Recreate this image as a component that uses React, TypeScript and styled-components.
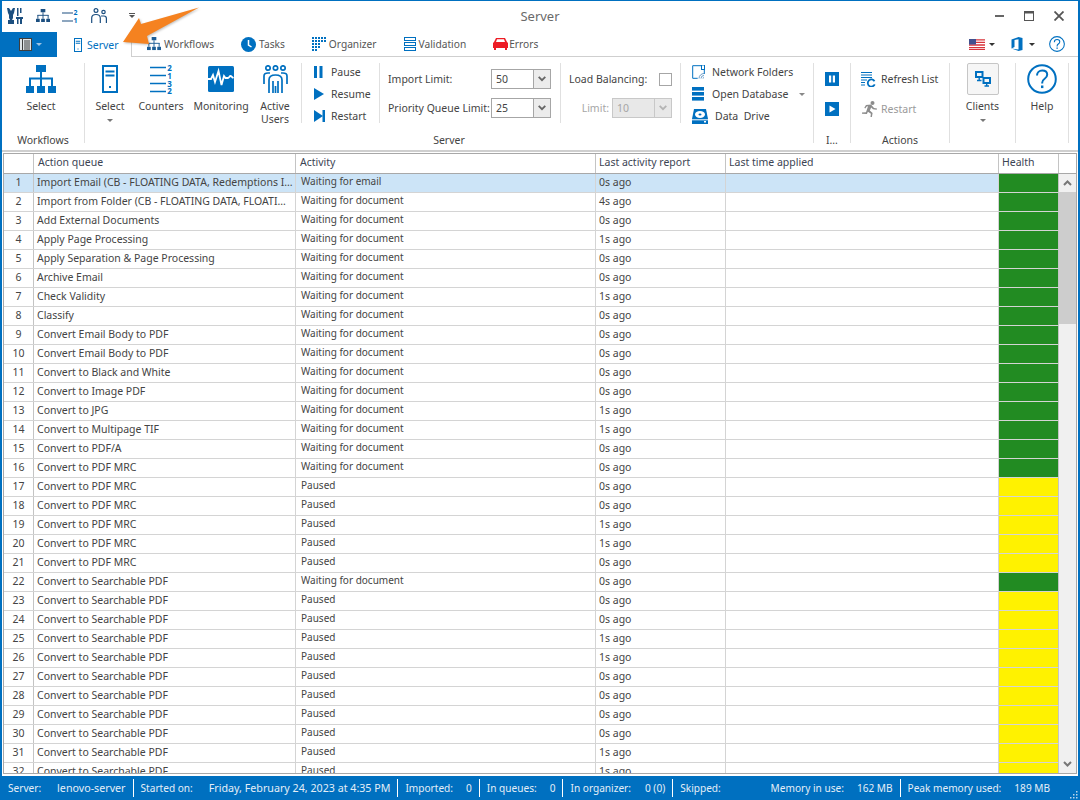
import React from 'react';
import styled, { createGlobalStyle } from 'styled-components';

const BLUE = '#0070c0';
const FONT = '"Noto Sans", "Liberation Sans", Arial, sans-serif';

const GlobalStyle = createGlobalStyle`
    html, body {
        margin: 0;
        padding: 0;
        background: #fff;
    }
    body {
        font-family: ${FONT};
        font-size: 10.5px;
        color: #444;
    }
`;

type Row = { name: string; activity: string; last: string; health: 'ok' | 'paused' };

const w = 'Waiting for document';
const p = 'Paused';
const rows: Row[] = [
    { name: 'Import Email (CB - FLOATING DATA, Redemptions I…', activity: 'Waiting for email', last: '0s ago', health: 'ok' },
    { name: 'Import from Folder (CB - FLOATING DATA, FLOATI…', activity: w, last: '4s ago', health: 'ok' },
    { name: 'Add External Documents', activity: w, last: '0s ago', health: 'ok' },
    { name: 'Apply Page Processing', activity: w, last: '1s ago', health: 'ok' },
    { name: 'Apply Separation & Page Processing', activity: w, last: '0s ago', health: 'ok' },
    { name: 'Archive Email', activity: w, last: '0s ago', health: 'ok' },
    { name: 'Check Validity', activity: w, last: '1s ago', health: 'ok' },
    { name: 'Classify', activity: w, last: '0s ago', health: 'ok' },
    { name: 'Convert Email Body to PDF', activity: w, last: '0s ago', health: 'ok' },
    { name: 'Convert Email Body to PDF', activity: w, last: '0s ago', health: 'ok' },
    { name: 'Convert to Black and White', activity: w, last: '0s ago', health: 'ok' },
    { name: 'Convert to Image PDF', activity: w, last: '0s ago', health: 'ok' },
    { name: 'Convert to JPG', activity: w, last: '1s ago', health: 'ok' },
    { name: 'Convert to Multipage TIF', activity: w, last: '1s ago', health: 'ok' },
    { name: 'Convert to PDF/A', activity: w, last: '0s ago', health: 'ok' },
    { name: 'Convert to PDF MRC', activity: w, last: '0s ago', health: 'ok' },
    { name: 'Convert to PDF MRC', activity: p, last: '0s ago', health: 'paused' },
    { name: 'Convert to PDF MRC', activity: p, last: '0s ago', health: 'paused' },
    { name: 'Convert to PDF MRC', activity: p, last: '1s ago', health: 'paused' },
    { name: 'Convert to PDF MRC', activity: p, last: '1s ago', health: 'paused' },
    { name: 'Convert to PDF MRC', activity: p, last: '0s ago', health: 'paused' },
    { name: 'Convert to Searchable PDF', activity: w, last: '0s ago', health: 'ok' },
    { name: 'Convert to Searchable PDF', activity: p, last: '0s ago', health: 'paused' },
    { name: 'Convert to Searchable PDF', activity: p, last: '0s ago', health: 'paused' },
    { name: 'Convert to Searchable PDF', activity: p, last: '1s ago', health: 'paused' },
    { name: 'Convert to Searchable PDF', activity: p, last: '1s ago', health: 'paused' },
    { name: 'Convert to Searchable PDF', activity: p, last: '0s ago', health: 'paused' },
    { name: 'Convert to Searchable PDF', activity: p, last: '0s ago', health: 'paused' },
    { name: 'Convert to Searchable PDF', activity: p, last: '0s ago', health: 'paused' },
    { name: 'Convert to Searchable PDF', activity: p, last: '0s ago', health: 'paused' },
    { name: 'Convert to Searchable PDF', activity: p, last: '1s ago', health: 'paused' },
    { name: 'Convert to Searchable PDF', activity: p, last: '1s ago', health: 'paused' },
];

/* icons */
const TreeIcon = ({ size = 30, color = BLUE }: { size?: number; color?: string }) => (
    <svg width={size} height={size * 28 / 30} viewBox="0 0 30 28" fill={color}>
        <rect x="10" y="0" width="10" height="7" />
        <rect x="14" y="7" width="2" height="6" />
        <rect x="3" y="12.5" width="24" height="2" />
        <rect x="3" y="13" width="2" height="8" />
        <rect x="14" y="13" width="2" height="8" />
        <rect x="25" y="13" width="2" height="8" />
        <rect x="0" y="21" width="8" height="7" />
        <rect x="11" y="21" width="8" height="7" />
        <rect x="22" y="21" width="8" height="7" />
    </svg>
);

const ServerIcon = ({ big }: { big?: boolean }) => (
    <svg width={big ? 16 : 8} height={big ? 28 : 14} viewBox="0 0 16 28" fill="none" stroke={BLUE} strokeWidth="2">
        <rect x="1" y="1" width="14" height="26" />
        <path d="M3.5 6.5h9M3.5 10.5h9" />
        <rect x="7" y="21" width="2" height="2" fill={BLUE} stroke="none" />
    </svg>
);

const CountersIcon = () => (
    <svg width="23" height="28" viewBox="0 0 23 28" overflow="visible">
        <path d="M0 2.500h16M0 10.500h16M0 18.500h16M0 26.500h16" stroke={BLUE} strokeWidth="1.6" />
        <g fill={BLUE} fontFamily={FONT} fontSize="8" fontWeight="700" textAnchor="middle">
            <text x="19.5" y="5.500">2</text>
            <text x="19.5" y="13.500">1</text>
            <text x="19.5" y="21.500">3</text>
            <text x="19.5" y="29">2</text>
        </g>
    </svg>
);

const MonitoringIcon = () => (
    <svg width="26" height="26" viewBox="0 0 26 26">
        <rect width="26" height="26" rx="1.5" fill={BLUE} />
        <path d="M0 13h3l2 -4 2 7 3.5 -11 3 14 2.5 -9 1.5 2h2.5c1 0 1.5 -2 2.5 -2s1 1 3 2" fill="none" stroke="#fff" strokeWidth="1.8" />
    </svg>
);

const ActiveUsersIcon = () => (
    <svg width="25" height="28" viewBox="0 0 25 28" fill="none" stroke={BLUE} strokeWidth="1.7">
        <circle cx="5" cy="3" r="2.2" />
        <circle cx="12.5" cy="3" r="2.2" />
        <circle cx="20" cy="3" r="2.2" />
        <path d="M1 19v-8c0-2 1.5-3 4-3h2" />
        <path d="M24 19v-8c0-2-1.5-3-4-3h-2" />
        <path d="M6 28v-13c0-3 2-5 6.5-5s6.5 2 6.5 5v13" />
        <path d="M10 28v-12M15 28v-12" />
        <path d="M12.5 21v7" />
    </svg>
);

const PauseIcon = () => (
    <svg width="9" height="12" viewBox="0 0 9 12" fill={BLUE}>
        <rect width="3" height="12" />
        <rect x="5.5" width="3" height="12" />
    </svg>
);

const PlayIcon = () => (
    <svg width="10" height="12" viewBox="0 0 10 12" fill={BLUE}>
        <path d="M0 0l10 6-10 6z" />
    </svg>
);

const RestartIcon = () => (
    <svg width="11" height="12" viewBox="0 0 11 12" fill={BLUE}>
        <path d="M0 0l9 6-9 6z" />
        <rect x="8.5" width="2.5" height="12" />
    </svg>
);

const NetworkIcon = () => (
    <svg width="13" height="14" viewBox="0 0 13 14" fill="none">
        <path d="M9 .7H.7v12.6h5M12.3 5v4" stroke={BLUE} />
        <rect x="9.5" y="0" width="3" height="4.5" fill="none" stroke={BLUE} />
        <path d="M7 13.5a5 5 0 0 1 5-5M9 13.5a3 3 0 0 1 3-3M11 13.5a1 1 0 0 1 1-1" stroke="#6a9cc8" />
    </svg>
);

const DatabaseIcon = () => (
    <svg width="12" height="14" viewBox="0 0 12 14" fill={BLUE}>
        <rect width="12" height="3.6" />
        <rect y="5" width="12" height="3.6" />
        <rect y="10" width="12" height="3.6" />
    </svg>
);

const DriveIcon = () => (
    <svg width="16" height="15" viewBox="0 0 16 15">
        <path d="M2 0h12l2 10v5H0v-5z" fill={BLUE} />
        <ellipse cx="8" cy="5.5" rx="5" ry="3.4" fill="#fff" />
        <ellipse cx="8" cy="5.5" rx="1.5" ry="1" fill={BLUE} />
        <path d="M0 10.8h16" stroke="#fff" />
        <rect x="12" y="12" width="2" height="1.5" fill="#fff" />
    </svg>
);

const SquareButtonIcon = ({ play }: { play?: boolean }) => (
    <svg width="14" height="14" viewBox="0 0 14 14">
        <rect width="14" height="14" fill={BLUE} />
        {play ? <path d="M4.5 3.5l6 3.5-6 3.5z" fill="#fff" /> : <path d="M4 3.5h2.2v7H4zM7.8 3.5H10v7H7.8z" fill="#fff" />}
    </svg>
);

const RefreshIcon = () => (
    <svg width="15" height="15" viewBox="0 0 15 15" fill="none" stroke={BLUE}>
        <path d="M0 .5h11M0 3h11M0 5.5h11M0 8h6M0 10.5h4M0 13h4" />
        <path d="M13.5 9.2a3.6 3.6 0 1 0 .2 3.2" strokeWidth="1.8" />
    </svg>
);

const RunnerIcon = () => (
    <svg width="17" height="16" viewBox="0 0 17 16" fill="#8c8c8c">
        <circle cx="11.5" cy="2" r="2" />
        <path d="M5 4l5-.5 3 3.5 3 .5-.3 1.3-3.7-.6-1.8-1.6-1.4 3 2.8 2.3-.7 4.1h-1.4l.4-3.3-3-2-1 2.3-4.9-.2v-1.4l4-.1 2-6-1.3.2-1.4 2-1-.7z" />
    </svg>
);

const ClientsIcon = () => (
    <svg width="16" height="16" viewBox="0 0 16 16" fill="none" stroke={BLUE} strokeWidth="2">
        <rect x="1" y="1" width="6.5" height="5" />
        <rect x="8.5" y="7" width="6.5" height="5" />
        <path d="M4.2 6v3.5M2 9.5h4.5M11.7 12v3M9.5 15h4.5" strokeWidth="1.4" />
    </svg>
);

const HelpCircle = ({ size }: { size: number }) => (
    <svg width={size} height={size} viewBox="0 0 30 30">
        <circle cx="15" cy="15" r="13.8" fill="none" stroke={BLUE} strokeWidth="2" />
        <path d="M10 11.5c0-3 2.2-5 5.2-5s5 1.8 5 4.3c0 2-1 3-2.8 4.2-1.5 1-2.2 1.8-2.2 3.7v.8" fill="none" stroke={BLUE} strokeWidth="2" />
        <rect x="14" y="21.5" width="2.4" height="2.6" fill={BLUE} />
    </svg>
);

const QuickToolsIcon = () => (
    <svg width="16" height="16" viewBox="0 0 16 16" fill="#1c4f80">
        <path d="M0 0l2 0 2 3 2-3 2 0-1 5-1 2v3l-1 2H3l-1-2V7L1 5z" />
        <path d="M10 0h1.5v8H10zM13 0h1.5v5H13z" />
        <path d="M9 9h7v2H9zM10 11h1.5v5H10zM13 11h2v5h-2zM1 12h6v4H1z" />
    </svg>
);

const QuickListIcon = () => (
    <svg width="16" height="14" viewBox="0 0 16 14" overflow="visible">
        <path d="M0 4h11M0 12h11" stroke="#1c4f80" strokeWidth="1.2" />
        <g fill={BLUE} fontFamily={FONT} fontSize="7" fontWeight="700" textAnchor="middle">
            <text x="13.5" y="6">2</text>
            <text x="13.5" y="14">1</text>
        </g>
    </svg>
);

const QuickUsersIcon = () => (
    <svg width="16" height="15" viewBox="0 0 16 15" fill="none" stroke="#1c4f80" strokeWidth="1.2">
        <circle cx="5" cy="2.5" r="1.9" />
        <circle cx="12.5" cy="4" r="1.7" />
        <path d="M.7 15V10c0-2.2 1.5-3.5 4.3-3.5S9.3 7.8 9.3 10v5" />
        <path d="M10 8h3c1.5 0 2.4.9 2.4 2.5V15" />
    </svg>
);

const FileIcon = () => (
    <svg width="13" height="13" viewBox="0 0 13 13">
        <rect x=".5" y=".5" width="12" height="12" fill="#dfe4e8" stroke="#3d3d3d" />
        <path d="M3.5 1v11" stroke="#3d3d3d" />
        <path d="M5 3h6M5 5h6M5 7h6M5 9h6M5 11h6" stroke="#3d3d3d" />
    </svg>
);

const ClockIcon = () => (
    <svg width="15" height="15" viewBox="0 0 15 15">
        <circle cx="7.5" cy="7.5" r="7.5" fill={BLUE} />
        <path d="M7.5 3v5l3 2" fill="none" stroke="#fff" strokeWidth="1.5" />
    </svg>
);

const OrganizerIcon = () => (
    <svg width="14" height="14" viewBox="0 0 14 14" fill={BLUE}>
        {[0, 1, 2, 3, 4].flatMap(r =>
            [0, 1, 2, 3, 4].filter(c => r === 0 || c < 2 || (r === 1 && c < 5) || (c < 3 && r < 4)).map(c => (
                <rect key={`${r}-${c}`} x={c * 3} y={r * 3} width="2" height="2" />
            ))
        )}
    </svg>
);

const ValidationIcon = () => (
    <svg width="12" height="14" viewBox="0 0 12 14" fill="none" stroke={BLUE}>
        <rect x=".5" y=".5" width="11" height="3" />
        <rect x=".5" y="5.5" width="11" height="3" />
        <rect x=".5" y="10.5" width="11" height="3" />
    </svg>
);

const CarIcon = () => (
    <svg width="15" height="12" viewBox="0 0 15 12" fill="#ed1c24">
        <path d="M3 0h9l2 4 1 1v5h-1v2h-2v-2H3v2H1v-2H0V5l1-1z" />
        <path d="M4 1.3h7l1 2.7H3z" fill="#fff" />
    </svg>
);

const FlagIcon = () => (
    <svg width="16" height="11" viewBox="0 0 16 11">
        <rect width="16" height="11" fill="#fff" />
        <path d="M0 .8h16M0 3.4h16M0 6h16M0 8.6h16" stroke="#d8343c" strokeWidth="1.3" />
        <rect y="10" width="16" height="1" fill="#d8343c" />
        <rect width="7" height="5.5" fill="#41508f" />
    </svg>
);

const OfficeIcon = () => (
    <svg width="12" height="14" viewBox="0 0 11 14" fill={BLUE}>
        <path d="M0 2.5L7 0l4 1v12l-4 1-7-2.5 7 1V2.2L3 3v7l-3 1.5z" />
    </svg>
);

const SelectChevron = ({ off }: { off?: boolean }) => (
    <svg width="8" height="6" viewBox="0 0 8 6" fill="none" stroke={off ? '#b4b4b4' : '#666'} strokeWidth="1.8">
        <path d="M.7 .8L4 4.2 7.3 .8" />
    </svg>
);

/* window chrome */
const Page = styled.div`
    position: relative;
    box-sizing: border-box;
    width: 1080px;
    height: 800px;
    overflow: hidden;
    display: flex;
    flex-direction: column;
    border: solid ${BLUE};
    border-width: 1px 2px 0;
    background: #fff;
`;

const TitleBar = styled.header`
    flex: none;
    height: 31px;
    box-sizing: border-box;
    padding-bottom: 2px;
    display: grid;
    grid-template-columns: 1fr auto 1fr;
    align-items: center;
`;

const QuickAccess = styled.div`
    display: flex;
    align-items: center;
    gap: 12.5px;
    padding-left: 5px;
`;

const QuickCaret = styled.span`
    margin-left: 10px;
    width: 6px;
    border-top: 1px solid #555;
    &::after {
        content: '';
        display: block;
        margin-top: 1px;
        border: 3px solid transparent;
        border-top: 3px solid #555;
        border-bottom: 0;
    }
`;

const Title = styled.div`
    font-size: 13px;
    color: #6a6a6a;
`;

const WindowControls = styled.div`
    display: flex;
    justify-content: flex-end;
    padding-right: 4px;
`;

const ControlButton = styled.div`
    width: 30px;
    height: 29px;
    display: flex;
    align-items: center;
    justify-content: center;
`;

const TabRow = styled.nav`
    flex: none;
    height: 24px;
    display: flex;
    align-items: stretch;
    border-bottom: 1px solid #cfcfcf;
`;

const FileButton = styled.div`
    width: 55px;
    margin-bottom: -1px;
    display: flex;
    align-items: center;
    padding-left: 17px;
    gap: 4px;
    box-sizing: border-box;
    background: ${BLUE};
`;

const SmallCaret = styled.span<{ $color?: string }>`
    width: 0;
    height: 0;
    border: 3px solid transparent;
    border-top: 3px solid ${p => p.$color || '#555'};
    border-bottom: 0;
`;

const ActiveTab = styled.div`
    width: 75px;
    box-sizing: border-box;
    margin-bottom: -1px;
    display: flex;
    align-items: center;
    gap: 5px;
    padding-left: 17px;
    background: #fff;
    border-right: 1px solid #cfcfcf;
    color: ${BLUE};
`;

const TabList = styled.div`
    display: flex;
    align-items: center;
    gap: 27px;
    padding-left: 15px;
`;

const Tab = styled.div<{ $gap?: number }>`
    display: flex;
    align-items: center;
    gap: ${p => p.$gap ?? 3}px;
    font-size: 10.2px;
    color: #555;
`;

const TabTools = styled.div`
    margin-left: auto;
    display: flex;
    align-items: center;
    padding-right: 13px;
`;

const TabTool = styled.div<{ $inner: number; $gap: number }>`
    display: flex;
    align-items: center;
    gap: ${p => p.$inner}px;
    margin-right: ${p => p.$gap}px;
`;

/* ribbon */
const Ribbon = styled.section`
    flex: none;
    box-sizing: border-box;
    height: 95px;
    display: flex;
    padding-top: 6px;
    border-bottom: 2px solid #cfcfcf;
`;

const Group = styled.div<{ $width: number }>`
    width: ${p => p.$width}px;
    flex: none;
    box-sizing: border-box;
    height: 80px;
    display: flex;
    flex-direction: column;
    border-right: 1px solid #e0e0e0;
`;

const GroupBody = styled.div`
    flex: 1;
    display: flex;
    min-height: 0;
`;

const GroupLabel = styled.div`
    text-align: center;
    line-height: 14px;
    margin-bottom: -4px;
    white-space: nowrap;
    color: #444;
`;

const Section = styled.div<{ $width: number; $pad?: number; $line?: boolean }>`
    width: ${p => p.$width}px;
    flex: none;
    box-sizing: border-box;
    height: 60px;
    padding-left: ${p => p.$pad || 0}px;
    border-right: ${p => (p.$line ? '1px solid #e0e0e0' : '0')};
`;

const BigRow = styled.div`
    display: flex;
`;

const BigButton = styled.div<{ $width: number }>`
    width: ${p => p.$width}px;
    flex: none;
    display: flex;
    flex-direction: column;
    align-items: center;
    text-align: center;
    line-height: 13px;
    color: #444;
`;

const BigIcon = styled.div`
    height: 32px;
    margin-bottom: 5px;
    display: flex;
    align-items: center;
`;

const BigLabel = styled.div`
    white-space: nowrap;
`;

const ClientsBox = styled.div`
    width: 32px;
    height: 32px;
    box-sizing: border-box;
    margin-bottom: 5px;
    display: flex;
    align-items: center;
    justify-content: center;
    border: 1px solid #c6c6c6;
    border-radius: 2px;
    background: #f6f6f6;
`;

const ButtonCaret = styled(SmallCaret)`
    margin-top: 6px;
    border-top-color: #777;
`;

const LineStack = styled.div`
    display: flex;
    flex-direction: column;
    gap: 4px;
`;

const LineButton = styled.div`
    height: 18px;
    display: flex;
    align-items: center;
    white-space: nowrap;
    color: #444;
`;

const LineIcon = styled.span<{ $width: number }>`
    width: ${p => p.$width}px;
    flex: none;
    display: flex;
    align-items: center;
`;

const FormStack = styled.div<{ $gap?: number }>`
    display: flex;
    flex-direction: column;
    gap: ${p => p.$gap ?? 9}px;
    padding-top: 6px;
`;

const FormRow = styled.div<{ $off?: boolean }>`
    height: 20px;
    display: flex;
    align-items: center;
    white-space: nowrap;
    color: ${p => (p.$off ? '#9a9a9a' : '#444')};
`;

const FieldLabel = styled.span<{ $width: number; $right?: boolean; $off?: boolean }>`
    width: ${p => p.$width}px;
    flex: none;
    box-sizing: border-box;
    text-align: ${p => (p.$right ? 'right' : 'left')};
    padding-right: ${p => (p.$right ? '3px' : '0')};
    color: ${p => (p.$off ? '#a6a6a6' : '#444')};
`;

const SelectBox = styled.div<{ $off?: boolean }>`
    width: 60px;
    height: 20px;
    box-sizing: border-box;
    display: flex;
    align-items: stretch;
    border: 1px solid ${p => (p.$off ? '#c8c8c8' : '#a6a6a6')};
    background: ${p => (p.$off ? '#e8e8e8' : '#fff')};
    color: ${p => (p.$off ? '#a6a6a6' : '#444')};
`;

const SelectValue = styled.span`
    flex: 1;
    padding-left: 4px;
    line-height: 18px;
`;

const SelectArrow = styled.span<{ $off?: boolean }>`
    width: 16px;
    display: flex;
    align-items: center;
    justify-content: center;
    border-left: 1px solid ${p => (p.$off ? '#c8c8c8' : '#a6a6a6')};
    background: ${p => (p.$off ? '#e8e8e8' : '#ececec')};
`;

const CheckBox = styled.span`
    width: 13px;
    height: 13px;
    box-sizing: border-box;
    border: 1px solid #a6a6a6;
    background: #fff;
`;

const DbCaret = styled(SmallCaret)`
    margin-left: 11px;
    border-top-color: #888;
`;

const IconStack = styled.div`
    flex: 1;
    display: flex;
    flex-direction: column;
    align-items: center;
    gap: 16px;
    padding-top: 9px;
`;

/* grid */
const GridWrap = styled.main`
    flex: 1;
    min-height: 0;
    padding: 1px 0 2px 1px;
    margin-right: 1px;
`;

const Grid = styled.div`
    height: 100%;
    box-sizing: border-box;
    display: flex;
    flex-direction: column;
    border: 1px solid #a8a8a8;
`;

const HeaderRow = styled.div`
    flex: none;
    height: 20px;
    box-sizing: border-box;
    display: grid;
    grid-template-columns: 30px 262px 300px 130px 273px 60px 17px;
    border-bottom: 1px solid #a8a8a8;
`;

const HeaderCell = styled.div`
    box-sizing: border-box;
    padding-left: 4px;
    line-height: 17px;
    border-right: 1px solid #c4c4c4;
    color: #3c4453;
    white-space: nowrap;
    &:nth-child(n + 4) {
        padding-left: 3px;
    }
    &:last-child {
        border-right: 0;
    }
`;

const GridBody = styled.div`
    flex: 1;
    min-height: 0;
    display: flex;
`;

const RowsClip = styled.div`
    flex: 1;
    min-width: 0;
    overflow: hidden;
`;

const DataRow = styled.div<{ $selected?: boolean }>`
    height: 19px;
    box-sizing: border-box;
    display: grid;
    grid-template-columns: 30px 262px 300px 130px 273px 60px;
    border-bottom: 1px solid #d4d4d4;
    background: ${p => (p.$selected ? '#cce4f7' : '#fff')};
`;

const Cell = styled.div`
    box-sizing: border-box;
    padding-left: 3px;
    line-height: 17px;
    border-right: 1px solid #d4d4d4;
    white-space: nowrap;
    overflow: hidden;
    color: #444;
`;

const ActivityCell = styled(Cell)`
    padding-left: 5px;
    font-size: 10px;
    line-height: 15px;
`;

const NumberCell = styled(Cell)`
    padding: 0;
    text-align: center;
    border-right-color: #c4c4c4;
`;

const HealthCell = styled.div<{ $state: Row['health'] }>`
    margin-bottom: -1px;
    height: 18px;
    border-right: 1px solid #c4c4c4;
    border-bottom: 1px solid #d4d4d4;
    background: ${p => (p.$state === 'ok' ? '#228b22' : '#fff200')};
`;

const ScrollBar = styled.div`
    flex: none;
    width: 17px;
    display: flex;
    flex-direction: column;
    background: #f0f0f0;
`;

const ScrollButton = styled.div`
    flex: none;
    height: 18px;
    display: flex;
    align-items: center;
    justify-content: center;
`;

const ScrollThumb = styled.div`
    flex: none;
    height: 132px;
    background: #cdcdcd;
`;

const ScrollTrack = styled.div`
    flex: 1;
`;

/* status bar */
const StatusBar = styled.footer`
    flex: none;
    height: 24px;
    margin: 0 -2px;
    position: relative;
    display: flex;
    align-items: center;
    padding: 0 16px 0 8px;
    background: ${BLUE};
    color: #e4eef7;
    font-size: 10.1px;
    white-space: nowrap;
`;

const StatusItem = styled.div<{ $gap: number; $line?: boolean }>`
    display: flex;
    gap: ${p => p.$gap}px;
    height: 18px;
    align-items: center;
    padding-right: 7px;
    margin-right: 7px;
    border-right: ${p => (p.$line ? '1px solid #fff' : '0')};
`;

const StatusWide = styled.span`
    font-size: 10.7px;
`;

const StatusSpacer = styled.div`
    flex: 1;
`;

const Grip = styled.svg`
    position: absolute;
    right: 2px;
    bottom: 1px;
`;

const Callout = styled.svg`
    position: absolute;
    left: 118px;
    top: 3px;
    pointer-events: none;
    filter: drop-shadow(1px 1px 1px rgba(0, 0, 0, 0.25));
`;

export default function App() {
    return (
        <>
            <GlobalStyle />
            <Page>
                <TitleBar>
                    <QuickAccess>
                        <QuickToolsIcon />
                        <TreeIcon size={14} color="#1c4f80" />
                        <QuickListIcon />
                        <QuickUsersIcon />
                        <QuickCaret />
                    </QuickAccess>
                    <Title>Server</Title>
                    <WindowControls>
                        <ControlButton>
                            <svg width="9" height="2"><rect width="9" height="2" fill="#666" /></svg>
                        </ControlButton>
                        <ControlButton>
                            <svg width="10" height="10" fill="none" stroke="#555"><rect x=".5" y=".5" width="9" height="9" /><path d="M0 1.5h10" strokeWidth="2" /></svg>
                        </ControlButton>
                        <ControlButton>
                            <svg width="10" height="10" stroke="#555" strokeWidth="1.8"><path d="M.5 .5l9 9M9.5 .5l-9 9" /></svg>
                        </ControlButton>
                    </WindowControls>
                </TitleBar>

                <TabRow>
                    <FileButton>
                        <FileIcon />
                        <SmallCaret $color="#9cc3e4" />
                    </FileButton>
                    <ActiveTab>
                        <ServerIcon />
                        Server
                    </ActiveTab>
                    <TabList>
                        <Tab><TreeIcon size={14} color="#1c5d96" />Workflows</Tab>
                        <Tab><ClockIcon />Tasks</Tab>
                        <Tab><OrganizerIcon />Organizer</Tab>
                        <Tab><ValidationIcon />Validation</Tab>
                        <Tab $gap={1}><CarIcon />Errors</Tab>
                    </TabList>
                    <TabTools>
                        <TabTool $inner={4} $gap={16}><FlagIcon /><SmallCaret $color="#333" /></TabTool>
                        <TabTool $inner={6} $gap={14}><OfficeIcon /><SmallCaret $color="#333" /></TabTool>
                        <HelpCircle size={16} />
                    </TabTools>
                </TabRow>

                <Ribbon>
                    <Group $width={83}>
                        <GroupBody>
                            <BigButton $width={78}>
                                <BigIcon><TreeIcon /></BigIcon>
                                <BigLabel>Select</BigLabel>
                            </BigButton>
                        </GroupBody>
                        <GroupLabel>Workflows</GroupLabel>
                    </Group>

                    <Group $width={729}>
                        <GroupBody>
                            <Section $width={217} $line>
                                <BigRow>
                                    <BigButton $width={50}>
                                        <BigIcon><ServerIcon big /></BigIcon>
                                        <BigLabel>Select</BigLabel>
                                        <ButtonCaret />
                                    </BigButton>
                                    <BigButton $width={52}>
                                        <BigIcon><CountersIcon /></BigIcon>
                                        <BigLabel>Counters</BigLabel>
                                    </BigButton>
                                    <BigButton $width={68}>
                                        <BigIcon><MonitoringIcon /></BigIcon>
                                        <BigLabel>Monitoring</BigLabel>
                                    </BigButton>
                                    <BigButton $width={40}>
                                        <BigIcon><ActiveUsersIcon /></BigIcon>
                                        <BigLabel>Active<br />Users</BigLabel>
                                    </BigButton>
                                </BigRow>
                            </Section>
                            <Section $width={78} $pad={12} $line>
                                <LineStack>
                                    <LineButton><LineIcon $width={17}><PauseIcon /></LineIcon>Pause</LineButton>
                                    <LineButton><LineIcon $width={17}><PlayIcon /></LineIcon>Resume</LineButton>
                                    <LineButton><LineIcon $width={17}><RestartIcon /></LineIcon>Restart</LineButton>
                                </LineStack>
                            </Section>
                            <Section $width={181} $pad={8} $line>
                                <FormStack>
                                    <FormRow>
                                        <FieldLabel $width={103}>Import Limit:</FieldLabel>
                                        <SelectBox>
                                            <SelectValue>50</SelectValue>
                                            <SelectArrow><SelectChevron /></SelectArrow>
                                        </SelectBox>
                                    </FormRow>
                                    <FormRow>
                                        <FieldLabel $width={103}>Priority Queue Limit:</FieldLabel>
                                        <SelectBox>
                                            <SelectValue>25</SelectValue>
                                            <SelectArrow><SelectChevron /></SelectArrow>
                                        </SelectBox>
                                    </FormRow>
                                </FormStack>
                            </Section>
                            <Section $width={120} $pad={8} $line>
                                <FormStack>
                                    <FormRow>
                                        <FieldLabel $width={90}>Load Balancing:</FieldLabel>
                                        <CheckBox />
                                    </FormRow>
                                    <FormRow>
                                        <FieldLabel $width={43} $right $off>Limit:</FieldLabel>
                                        <SelectBox $off>
                                            <SelectValue>10</SelectValue>
                                            <SelectArrow $off><SelectChevron off /></SelectArrow>
                                        </SelectBox>
                                    </FormRow>
                                </FormStack>
                            </Section>
                            <Section $width={132} $pad={11}>
                                <LineStack>
                                    <LineButton><LineIcon $width={20}><NetworkIcon /></LineIcon>Network Folders</LineButton>
                                    <LineButton><LineIcon $width={20}><DatabaseIcon /></LineIcon>Open Database<DbCaret /></LineButton>
                                    <LineButton><LineIcon $width={23}><DriveIcon /></LineIcon>Data&nbsp; Drive</LineButton>
                                </LineStack>
                            </Section>
                        </GroupBody>
                        <GroupLabel>Server</GroupLabel>
                    </Group>

                    <Group $width={37}>
                        <GroupBody>
                            <IconStack>
                                <SquareButtonIcon />
                                <SquareButtonIcon play />
                            </IconStack>
                        </GroupBody>
                        <GroupLabel>I…</GroupLabel>
                    </Group>

                    <Group $width={99}>
                        <GroupBody>
                            <Section $width={98} $pad={10}>
                                <FormStack $gap={10}>
                                    <FormRow><LineIcon $width={20}><RefreshIcon /></LineIcon>Refresh List</FormRow>
                                    <FormRow $off><LineIcon $width={20}><RunnerIcon /></LineIcon>Restart</FormRow>
                                </FormStack>
                            </Section>
                        </GroupBody>
                        <GroupLabel>Actions</GroupLabel>
                    </Group>

                    <Group $width={66}>
                        <BigButton $width={65}>
                            <ClientsBox><ClientsIcon /></ClientsBox>
                            <BigLabel>Clients</BigLabel>
                            <ButtonCaret />
                        </BigButton>
                    </Group>

                    <Group $width={53}>
                        <BigButton $width={52}>
                            <BigIcon><HelpCircle size={30} /></BigIcon>
                            <BigLabel>Help</BigLabel>
                        </BigButton>
                    </Group>
                </Ribbon>

                <GridWrap>
                    <Grid>
                        <HeaderRow>
                            <HeaderCell />
                            <HeaderCell>Action queue</HeaderCell>
                            <HeaderCell>Activity</HeaderCell>
                            <HeaderCell>Last activity report</HeaderCell>
                            <HeaderCell>Last time applied</HeaderCell>
                            <HeaderCell>Health</HeaderCell>
                            <HeaderCell />
                        </HeaderRow>
                        <GridBody>
                            <RowsClip>
                                {rows.map((row, i) => (
                                    <DataRow key={i} $selected={i === 0}>
                                        <NumberCell>{i + 1}</NumberCell>
                                        <Cell>{row.name}</Cell>
                                        <ActivityCell>{row.activity}</ActivityCell>
                                        <Cell>{row.last}</Cell>
                                        <Cell />
                                        <HealthCell $state={row.health} />
                                    </DataRow>
                                ))}
                            </RowsClip>
                            <ScrollBar>
                                <ScrollButton>
                                    <svg width="9" height="6" fill="none" stroke="#777" strokeWidth="2"><path d="M1 5l3.5-3.5L8 5" /></svg>
                                </ScrollButton>
                                <ScrollThumb />
                                <ScrollTrack />
                                <ScrollButton>
                                    <svg width="9" height="6" fill="none" stroke="#777" strokeWidth="2"><path d="M1 1l3.5 3.5L8 1" /></svg>
                                </ScrollButton>
                            </ScrollBar>
                        </GridBody>
                    </Grid>
                </GridWrap>

                <StatusBar>
                    <StatusItem $gap={16} $line><span>Server:</span><StatusWide>lenovo-server</StatusWide></StatusItem>
                    <StatusItem $gap={16} $line><span>Started on:</span><StatusWide>Friday, February 24, 2023 at 4:35 PM</StatusWide></StatusItem>
                    <StatusItem $gap={13} $line><span>Imported:</span><span>0</span></StatusItem>
                    <StatusItem $gap={13} $line><span>In queues:</span><span>0</span></StatusItem>
                    <StatusItem $gap={14} $line><span>In organizer:</span><span>0 (0)</span></StatusItem>
                    <StatusItem $gap={0}><span>Skipped:</span></StatusItem>
                    <StatusSpacer />
                    <StatusItem $gap={13} $line><span>Memory in use:</span><span>162 MB</span></StatusItem>
                    <StatusItem $gap={13}><span>Peak memory used:</span><span>189 MB</span></StatusItem>
                    <Grip width="9" height="9" viewBox="0 0 9 9" fill="#b8d4ea">
                        <rect x="7" y="1" width="1.5" height="1.5" />
                        <rect x="4" y="4" width="1.5" height="1.5" />
                        <rect x="7" y="4" width="1.5" height="1.5" />
                        <rect x="1" y="7" width="1.5" height="1.5" />
                        <rect x="4" y="7" width="1.5" height="1.5" />
                        <rect x="7" y="7" width="1.5" height="1.5" />
                    </Grip>
                </StatusBar>

                <Callout width="84" height="44" viewBox="0 0 84 44">
                    <path d="M79 3.5L21 20l-2-6L3 38l26 2-2-8z" fill="#f58220" />
                </Callout>
            </Page>
        </>
    );
}
